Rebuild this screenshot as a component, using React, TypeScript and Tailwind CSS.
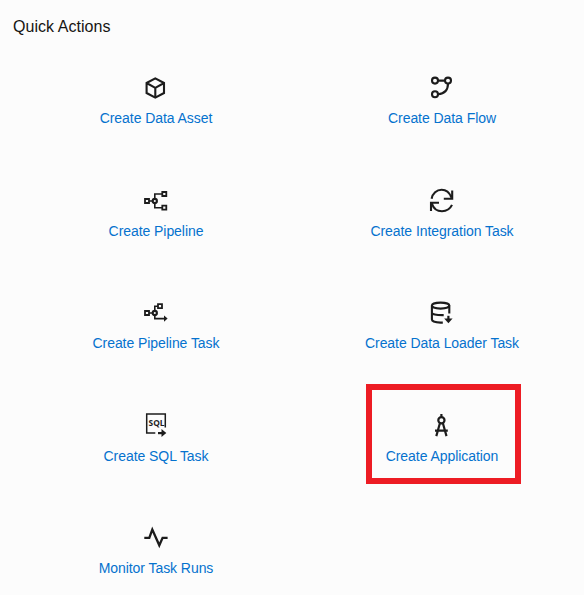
import type { ReactNode } from "react";

const arrowHead = { fill: "#1c1c1c", stroke: "none" };

const icons: Record<string, ReactNode> = {
  asset: <path d="M20.3 8.4 29 13v10l-8.7 4.6L11.6 23V13ZM11.6 13l8.7 4.8L29 13M20.3 17.8v9.8" />,
  flow: (
    <>
      <circle cx="14" cy="10.6" r="3" />
      <circle cx="27" cy="10.6" r="3" />
      <circle cx="14" cy="24.3" r="3" />
      <path d="M17 10.6h7M27 13.6c0 6.5-3.8 10.3-10 10.7" />
    </>
  ),
  pipeline: (
    <g transform="translate(0 .5)">
      <path strokeWidth="1.8" d="M10 15.5h4v4h-4ZM27.3 8.5h4v4h-4ZM27.3 22.2h4v4h-4Z" />
      <circle cx="19.8" cy="17.5" r="2.1" />
      <path strokeWidth="1.6" d="M14 17.5h4M19.8 15.5v-5h7.5M19.8 19.5v4.7h7.5" />
    </g>
  ),
  integration: (
    <path transform="translate(0 .5)" d="M10.6 15.2c1-5.2 5-8.9 10-8.9 4.5 0 8 3 9.7 7.6M31.2 7v8.3h-8.4M31 21.4c-1.8 3.8-5.6 6.3-10 6.3-4.8 0-8.6-3-10-7.5M10 27.5v-8.2h8" />
  ),
  pipelineTask: (
    <g transform="translate(0 1)">
      <path strokeWidth="1.8" d="M10 15h4v4h-4ZM23 8.2h4v4h-4Z" />
      <circle cx="19.8" cy="17" r="2.1" />
      <path strokeWidth="1.6" d="M14 17h4M19.8 15v-4.8H23M19.8 19v3.6h10.4" />
      <path {...arrowHead} d="m29 19.4 3.6 3.2-3.6 3.2Z" />
    </g>
  ),
  loader: (
    <g transform="translate(0 1)">
      <ellipse cx="19.6" cy="9.6" rx="8.7" ry="3" />
      <path d="M10.9 9.6v14c0 1.8 3.8 3 8.7 3h2.2M28.3 9.6v8M10.9 16.5c0 1.8 3.8 2.7 11.8 2.6" />
      <path strokeWidth="2.2" d="M27.4 19.8v5" />
      <path {...arrowHead} d="M23.2 22.4h8.4l-4.2 4.9Z" />
    </g>
  ),
  sql: (
    <g transform="translate(0 .5)">
      <path strokeWidth="1.5" d="M30.3 19V5.4H11.7v19.2h8.6" />
      <path strokeWidth="2.2" d="M23 24.6h5.5" />
      <path {...arrowHead} d="m26.5 20.6 4.8 4-4.8 4Z" />
      <text x="21.6" y="17.6" textAnchor="middle" textLength="16" lengthAdjust="spacingAndGlyphs" className="fill-[#1c1c1c] stroke-none font-['Open_Sans',sans-serif] text-[8px] font-bold">SQL</text>
    </g>
  ),
  application: (
    <path transform="translate(0 .5)" strokeWidth="2.2" d="M20.4 5.6v3M17.3 11.8a3.1 3.1 0 1 0 6.2 0a3.1 3.1 0 1 0-6.2 0M18.9 14.8l-3.6 12.8M21.9 14.8l3.6 12.8M14 22.2h12.8" />
  ),
  monitor: <path strokeWidth="2.3" d="M9.3 17.8h5L17.3 9.5l7 15.8 3.3-7.5h5" />,
};

const actions = [
  ["asset", "Create Data Asset"],
  ["flow", "Create Data Flow"],
  ["pipeline", "Create Pipeline"],
  ["integration", "Create Integration Task"],
  ["pipelineTask", "Create Pipeline Task"],
  ["loader", "Create Data Loader Task"],
  ["sql", "Create SQL Task"],
  ["application", "Create Application"],
  ["monitor", "Monitor Task Runs"],
];

export default function App() {
  return (
    <main className="h-[595px] w-[584px] overflow-hidden bg-[#fcfcfc] pl-[13px] pt-[15px] font-['Liberation_Sans',Arial,sans-serif]">
      <h1 className="h-6 text-base leading-6 tracking-[0.04px] text-[#161513]">Quick Actions</h1>
      <div className="mt-[19px] grid auto-rows-[112.5px] grid-cols-[286px_286px]">
        {actions.map(([icon, label]) => (
          <div key={icon} className="relative flex flex-col items-center pt-3">
            {icon === "application" && (
              <div className="absolute left-[67px] top-[-12px] h-[100px] w-[155px] border-[6px] border-[#ed1c24]" />
            )}
            <svg width="40" height="34" viewBox="1 0 40 34" fill="none" stroke="#1c1c1c" strokeWidth="2.1" aria-hidden="true">
              {icons[icon]}
            </svg>
            <a className="mt-1 text-sm leading-5 tracking-[-0.06px] whitespace-nowrap text-[#0572ce]">{label}</a>
          </div>
        ))}
      </div>
    </main>
  );
}
